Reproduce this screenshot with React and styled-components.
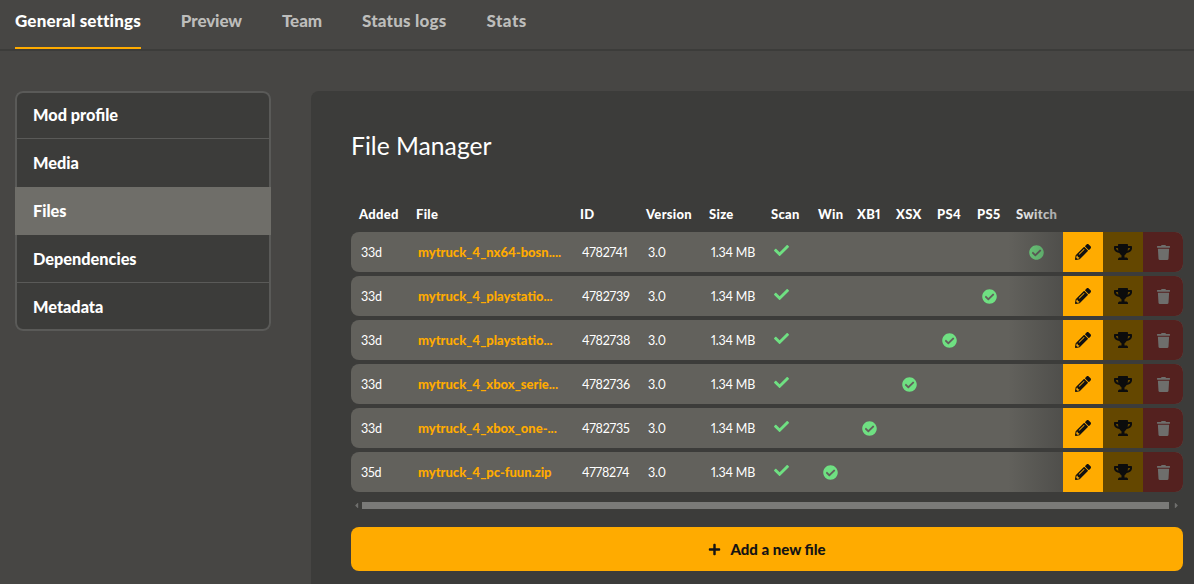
import React from "react";
import styled, { createGlobalStyle } from "styled-components";
import { FaCheck, FaCheckCircle, FaPencilAlt, FaTrophy, FaTrash, FaPlus, FaCaretLeft, FaCaretRight } from "react-icons/fa";

const Global = createGlobalStyle`
  html, body { margin: 0; padding: 0; background: #474644; overflow: hidden; }
  body { font-family: "Lato", "Noto Sans", sans-serif; color: #fff; width: 1194px; height: 584px; font-variant-numeric: proportional-nums; }
`;

const Tabs = styled.nav`
  display: flex;
  gap: 40px;
  height: 49px;
  padding-left: 15px;
  border-bottom: 2px solid #3c3c3a;
`;
const Tab = styled.div`
  height: 49px;
  box-sizing: border-box;
  padding-top: 11px;
  font-size: 17px;
  line-height: 20px;
  letter-spacing: ${(p) => p.$track}px;
  font-weight: 900;
  white-space: nowrap;
  color: ${(p) => (p.$active ? "#fff" : "#bdbdbb")};
  border-bottom: 2px solid ${(p) => (p.$active ? "#ffab00" : "transparent")};
`;
const Body = styled.div`
  display: flex;
  gap: 40px;
  padding: 40px 0 0 15px;
`;
const Side = styled.ul`
  list-style: none;
  margin: 0;
  padding: 0;
  width: 256px;
  height: 240px;
  flex: none;
  background: #3c3c3a;
  box-shadow: inset 0 0 0 2px #5a5a58;
  border-radius: 8px;
  display: flex;
  flex-direction: column;
`;
const SideItem = styled.li`
  height: 48px;
  box-sizing: border-box;
  display: flex;
  align-items: center;
  padding-left: 18px;
  font-size: 16.3px;
  font-weight: 900;
  background: ${(p) => (p.$active ? "#6f6e69" : "transparent")};
  border-bottom: 1px solid ${(p) => (p.$line ? "#5a5a58" : "transparent")};
`;
const Panel = styled.section`
  flex: 1;
  height: 493px;
  box-sizing: border-box;
  background: #3c3c3a;
  border-radius: 8px 0 0 0;
  padding: 40px 11px 0 40px;
`;
const Title = styled.h1`
  margin: 0 0 42px;
  font-size: 24.7px;
  line-height: 30px;
  font-weight: 400;
`;
const Table = styled.div`
  position: relative;
  width: 832px;
`;
const columns = "57px 164px 66px 63px 62px 47px 39px 39px 41px 40px 39px 55px 40px 40px 40px";
const HeadRow = styled.div`
  display: grid;
  grid-template-columns: ${columns};
  height: 22px;
  margin-bottom: 7px;
  align-items: center;
`;
const Head = styled.div`
  font-size: 13px;
  font-weight: 900;
  letter-spacing: 0.3px;
  white-space: nowrap;
  padding-left: 8px;
`;
const Row = styled.div`
  display: grid;
  grid-template-columns: ${columns};
  height: 40px;
  margin-bottom: 4px;
  align-items: center;
  background: #62615c;
  border-radius: 8px;
  overflow: hidden;
  font-size: 12.5px;
  letter-spacing: -0.2px;
`;
const Cell = styled.div`
  padding-left: 10px;
  white-space: nowrap;
`;
const FileName = styled.div`
  padding-left: 10px;
  color: #ffab00;
  font-weight: 900;
  font-size: 13px;
  letter-spacing: 0;
  white-space: nowrap;
`;
const ScanMark = styled.div`
  padding: 0 0 4px 11px;
  color: #6fe082;
  font-size: 15px;
  line-height: 0;
`;
const Status = styled.div`
  display: flex;
  justify-content: center;
  padding-left: 1px;
  color: #6fe082;
  font-size: 15px;
`;
const Action = styled.div`
  height: 40px;
  display: flex;
  align-items: center;
  justify-content: center;
  background: ${(p) => p.$bg};
  color: ${(p) => p.$fg};
`;
const Fade = styled.div`
  position: absolute;
  top: 0;
  bottom: 0;
  left: 657px;
  width: 55px;
  background: linear-gradient(90deg, rgba(60,60,58,0), rgba(60,60,58,0.5));
`;
const Scroll = styled.div`
  display: flex;
  align-items: center;
  height: 7px;
  margin-top: 10px;
  color: #6f6f6d;
  font-size: 9px;
  width: 832px;
`;
const ScrollArrow = styled.div`
  width: ${(p) => p.$w}px;
  display: flex;
  justify-content: center;
`;
const Thumb = styled.div`
  width: 807px;
  height: 7px;
  background: #7a7a78;
`;
const AddButton = styled.button`
  display: flex;
  align-items: center;
  justify-content: center;
  gap: 9px;
  width: 832px;
  height: 44px;
  margin-top: 18px;
  border: 0;
  border-radius: 8px;
  background: #ffab00;
  color: #141414;
  font: 900 15px "Lato", sans-serif;
`;

const tabs = [
  ["General settings", 0.15],
  ["Preview", -0.1],
  ["Team", -0.1],
  ["Status logs", 0.2],
  ["Stats", 0.5],
];
const rows = [
  ["33d", "mytruck_4_nx64-bosn....", "4782741", 11],
  ["33d", "mytruck_4_playstatio...", "4782739", 10],
  ["33d", "mytruck_4_playstatio...", "4782738", 9],
  ["33d", "mytruck_4_xbox_serie...", "4782736", 8],
  ["33d", "mytruck_4_xbox_one-...", "4782735", 7],
  ["35d", "mytruck_4_pc-fuun.zip", "4778274", 6],
];
const heads = ["Added", "File", "ID", "Version", "Size", "Scan", "Win", "XB1", "XSX", "PS4", "PS5", "Switch"];
const slots = [6, 7, 8, 9, 10, 11];

export default function App() {
  return (
    <>
      <Global />
      <Tabs>
        {tabs.map(([label, track], i) => (
          <Tab key={label} $active={i === 0} $track={track}>{label}</Tab>
        ))}
      </Tabs>
      <Body>
        <Side>
          <SideItem $line>Mod profile</SideItem>
          <SideItem>Media</SideItem>
          <SideItem $active>Files</SideItem>
          <SideItem $line>Dependencies</SideItem>
          <SideItem>Metadata</SideItem>
        </Side>
        <Panel>
          <Title>File Manager</Title>
          <Table>
            <HeadRow>
              {heads.map((h) => <Head key={h}>{h}</Head>)}
            </HeadRow>
            {rows.map(([age, name, id, slot]) => (
              <Row key={id}>
                <Cell>{age}</Cell>
                <FileName>{name}</FileName>
                <Cell>{id}</Cell>
                <Cell>3.0</Cell>
                <Cell>1.34 MB</Cell>
                <ScanMark><FaCheck /></ScanMark>
                {slots.map((s) => (
                  <Status key={s}>{s === slot ? <FaCheckCircle /> : null}</Status>
                ))}
                <Action $bg="#ffab00" $fg="#111"><FaPencilAlt size={16} /></Action>
                <Action $bg="#644700" $fg="#0c0c0c"><FaTrophy size={18} /></Action>
                <Action $bg="#54211f" $fg="#6e6e6c"><FaTrash size={15} /></Action>
              </Row>
            ))}
            <Fade />
          </Table>
          <Scroll>
            <ScrollArrow $w={11}><FaCaretLeft /></ScrollArrow>
            <Thumb />
            <ScrollArrow $w={14}><FaCaretRight /></ScrollArrow>
          </Scroll>
          <AddButton><FaPlus size={13} />Add a new file</AddButton>
        </Panel>
      </Body>
    </>
  );
}
